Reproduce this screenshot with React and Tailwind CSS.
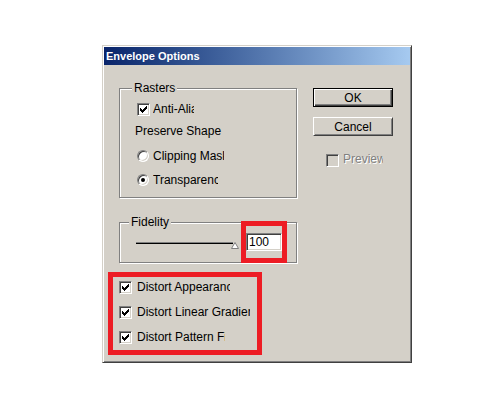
// ─── SMALL PARTS ──────────────────────────────────────────
const CheckMark = ({ color = "#000" }) => (
  <svg width="7" height="7" viewBox="0 0 7 7" className="block" shapeRendering="crispEdges">
    {[2, 3, 4, 3, 2, 1, 0].map((y, x) => (
      <rect key={x} x={x} y={y} width="1" height="3" fill={color} />
    ))}
  </svg>
);

const Checkbox = ({ checked, disabled }) => (
  <span
    className={`flex h-[13px] w-[13px] shrink-0 items-center justify-center border border-t-[#808080] border-l-[#808080] border-r-white border-b-white shadow-[inset_1px_1px_0_#404040,inset_-1px_-1px_0_#d4d0c8] ${
      disabled ? "bg-[#d4d0c8]" : "bg-white"
    }`}
  >
    {checked && <CheckMark />}
  </span>
);

const Radio = ({ checked }) => (
  <span className="flex h-[12px] w-[12px] shrink-0 items-center justify-center rounded-full border border-t-[#808080] border-l-[#808080] border-r-white border-b-white bg-white shadow-[inset_1px_1px_0_#404040,inset_-1px_-1px_0_#d4d0c8]">
    {checked && <span className="h-[4px] w-[4px] rounded-full bg-black" />}
  </span>
);

const Clip = ({ w, children }) => (
  <span className={`inline-block overflow-hidden whitespace-nowrap ${w}`}>{children}</span>
);

const GroupBox = ({ label, labelLeft, className, children }) => (
  <div
    className={`relative ml-[11px] w-[178px] border border-[#808080] shadow-[1px_1px_0_#fff,inset_1px_1px_0_#fff] ${className}`}
  >
    <span className={`absolute top-[-8px] bg-[#d4d0c8] px-[2px] ${labelLeft}`}>{label}</span>
    {children}
  </div>
);

// ─── DIALOG ───────────────────────────────────────────────
export default function App() {
  return (
    <div className="h-[401px] w-[500px] overflow-hidden bg-white pl-[102px] pt-[45px] font-['Liberation_Sans',Arial,sans-serif] text-[12px] leading-[14px] text-black">
      <div className="flex h-[318px] w-[310px] flex-col border border-t-[#d4d0c8] border-l-[#d4d0c8] border-r-[#404040] border-b-[#404040] bg-[#d4d0c8] p-[1px] shadow-[inset_1px_1px_0_#fff,inset_-1px_-1px_0_#808080]">
        {/* Title bar */}
        <div className="flex h-[18px] items-center bg-gradient-to-r from-[#0a246a] to-[#a6caf0] pl-[2px] text-[11px] font-bold text-white">
          Envelope Options
        </div>

        <div className="flex pl-[4px] pt-[23px]">
          {/* Left column */}
          <div className="flex w-[189px] flex-col">
            <GroupBox label="Rasters" labelLeft="left-[12px]" className="h-[110px]">
              <div className="flex flex-col pl-[17px]">
                <div className="mt-[12px] flex h-[16px] items-center gap-[3px]">
                  <Checkbox checked />
                  <Clip w="w-[41px]">Anti-Alias</Clip>
                </div>
                <div className="-ml-[2px] mt-[6px] flex h-[16px] items-center">Preserve Shape</div>
                <div className="mt-[9px] flex h-[16px] items-center gap-[4px]">
                  <Radio />
                  <Clip w="w-[71px]">Clipping Mask</Clip>
                </div>
                <div className="mt-[8px] flex h-[16px] items-center gap-[4px]">
                  <Radio checked />
                  <Clip w="w-[65px]">Transparency</Clip>
                </div>
              </div>
            </GroupBox>

            <GroupBox label="Fidelity" labelLeft="left-[9px]" className="mt-[24px] h-[41px]">
              <div className="flex items-center pl-[16px] pt-[10px]">
                <div className="relative h-[18px] w-[110px] shrink-0">
                  <div className="absolute left-0 top-[9px] h-[2px] w-[97px] border-t border-b border-t-[#808080] border-b-black" />
                  <svg
                    className="absolute left-[95px] top-[9px]"
                    width="8"
                    height="7"
                    viewBox="0 0 8 7"
                  >
                    <polygon points="0.5,6.5 4,0.5 7.5,6.5" fill="#fff" stroke="#808080" />
                  </svg>
                </div>
                <div className="flex h-[18px] w-[36px] shrink-0 items-center border border-t-[#808080] border-l-[#808080] border-r-white border-b-white bg-white pl-[2px] shadow-[inset_1px_1px_0_#404040,inset_-1px_-1px_0_#d4d0c8]">
                  100
                </div>
              </div>
              {/* annotation around the value */}
              <div className="absolute left-[121px] top-[-2px] h-[42px] w-[46px] border-[5px] border-[#ed1c24]" />
            </GroupBox>

            <div className="mt-[9px] flex h-[83px] w-[154px] flex-col gap-[9px] border-[5px] border-[#ed1c24] pl-[6px] pt-[2px]">
              <div className="flex h-[16px] items-center gap-[5px]">
                <Checkbox checked />
                <Clip w="w-[93px]">Distort Appearance</Clip>
              </div>
              <div className="flex h-[16px] items-center gap-[5px]">
                <Checkbox checked />
                <Clip w="w-[113px]">Distort Linear Gradients</Clip>
              </div>
              <div className="flex h-[16px] items-center gap-[5px]">
                <Checkbox checked />
                <Clip w="w-[88px]">Distort Pattern Fills</Clip>
              </div>
            </div>
          </div>

          {/* Right column */}
          <div className="ml-[16px] flex w-[80px] flex-col">
            <button
              type="button"
              className="h-[19px] w-[80px] border border-black bg-[#d4d0c8] leading-none shadow-[inset_1px_1px_0_#fff,inset_-1px_-1px_0_#404040,inset_-2px_-2px_0_#808080]"
            >
              OK
            </button>
            <button
              type="button"
              className="mt-[10px] h-[19px] w-[80px] border border-t-white border-l-white border-r-[#404040] border-b-[#404040] bg-[#d4d0c8] leading-none shadow-[inset_1px_1px_0_#d4d0c8,inset_-1px_-1px_0_#808080]"
            >
              Cancel
            </button>
            <div className="mt-[18px] flex h-[13px] items-center gap-[4px] pl-[13px]">
              <Checkbox disabled />
              <span className="text-[#808080] [text-shadow:1px_1px_0_#fff]">
                <Clip w="w-[40px]">Preview</Clip>
              </span>
            </div>
          </div>
        </div>
      </div>
    </div>
  );
}
